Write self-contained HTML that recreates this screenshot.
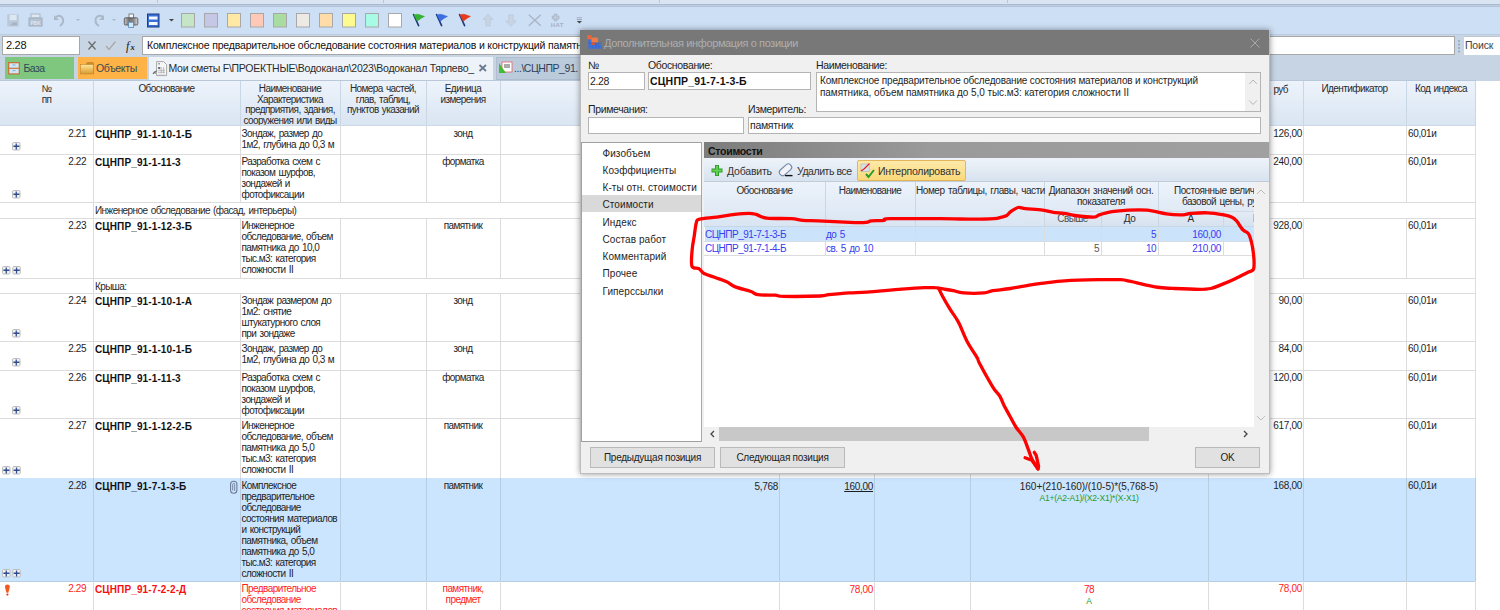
<!DOCTYPE html><html><head><meta charset="utf-8"><style>
html,body{margin:0;padding:0;}
body{width:1500px;height:610px;overflow:hidden;position:relative;background:#fff;font-family:"Liberation Sans",sans-serif;}
div{position:absolute;box-sizing:border-box;}
.g{white-space:pre;font-size:10px;line-height:11px;letter-spacing:-0.58px;word-spacing:1px;color:#1e1e1e;}
.n{white-space:pre;font-size:10px;line-height:11px;color:#1e1e1e;}
.b{white-space:pre;font-size:10px;line-height:11px;font-weight:bold;letter-spacing:0.12px;color:#111;}
.d{white-space:pre;font-size:10px;line-height:12px;color:#1e1e1e;}
svg{position:absolute;overflow:visible;}
</style></head><body><div style="left:0px;top:0px;width:1500px;height:4px;background:#d9e5f2"></div><div style="left:157px;top:0px;width:1px;height:3px;background:#b8c6d6"></div><div style="left:383px;top:0px;width:1px;height:3px;background:#b8c6d6"></div><div style="left:659px;top:0px;width:1px;height:3px;background:#b8c6d6"></div><div style="left:1007px;top:0px;width:1px;height:3px;background:#b8c6d6"></div><div style="left:0px;top:4px;width:1500px;height:1px;background:#a8b8cf"></div><div style="left:0px;top:5px;width:1500px;height:1px;background:#c3cfde"></div><div style="left:0px;top:6px;width:1500px;height:1px;background:#b0c2d9"></div><div style="left:0px;top:7px;width:1500px;height:27px;background:#cddff4"></div><div style="left:0px;top:34px;width:1500px;height:1px;background:#bccce0"></div><div style="left:0px;top:35px;width:1500px;height:21px;background:#c8d5e5"></div><div style="left:0px;top:56px;width:1500px;height:25px;background:#c6d4e4"></div><svg width="1500" height="40" style="left:0;top:0"><rect x="7.2" y="14.4" width="11.6" height="12" fill="#bcc9d8"/><rect x="9.6" y="15" width="7" height="5.2" fill="#dde7f3"/><path d="M10 25.5 l3 -3 h4 v3z" fill="#a4b3c5"/><rect x="31" y="14" width="9" height="4" fill="#dfe7f0" stroke="#aab8c8"/><rect x="29" y="18" width="13" height="8" fill="#b5c2d1" stroke="#9fb0c3"/><text x="30.5" y="24.5" font-size="5" fill="#eef" font-family="Liberation Sans">PBK</text><path d="M56 17 q5 -3 7 2 q1 4 -3 7" fill="none" stroke="#aab8c8" stroke-width="2"/><path d="M54 15 l0 5 l5 0z" fill="#aab8c8"/><path d="M76 19 l2 2 l2 -2z" fill="#aab8c8"/><path d="M99 26 q-5 -3 -3 -8 q3 -4 7 -1" fill="none" stroke="#aab8c8" stroke-width="2"/><path d="M104 15 l0 5 l-5 0z" fill="#aab8c8"/><path d="M112 19 l2 2 l2 -2z" fill="#aab8c8"/><defs><linearGradient id="pg" x1="0" y1="0" x2="1" y2="0"><stop offset="0" stop-color="#c8c8c8"/><stop offset="0.35" stop-color="#707070"/><stop offset="0.7" stop-color="#8a8a8a"/><stop offset="1" stop-color="#d8d8d8"/></linearGradient></defs><rect x="129" y="14" width="4.5" height="4.5" fill="#fafafa" stroke="#666" stroke-width="0.8"/><rect x="124.3" y="17.8" width="13.5" height="7.2" rx="1.2" fill="url(#pg)" stroke="#4a4a4a" stroke-width="0.8"/><rect x="128.6" y="22.2" width="5" height="5.3" fill="#cfe8fb" stroke="#5a88b8" stroke-width="0.8"/><rect x="147.5" y="14" width="11.5" height="13" fill="#3a6fd8" stroke="#1d3f7a"/><rect x="149" y="16.5" width="8.5" height="3" fill="#f4f8ff"/><rect x="149" y="22" width="8.5" height="3" fill="#f4f8ff"/><path d="M169 19 l2.5 2.5 l2.5 -2.5z" fill="#444"/><rect x="181.5" y="13.5" width="13" height="13.5" fill="#c6e5c6" stroke="#a8a8a8"/><rect x="204.5" y="13.5" width="13" height="13.5" fill="#c6c6e7" stroke="#a8a8a8"/><rect x="227.5" y="13.5" width="13" height="13.5" fill="#ffe9a4" stroke="#a8a8a8"/><rect x="250.5" y="13.5" width="13" height="13.5" fill="#ffc9b8" stroke="#a8a8a8"/><rect x="273.5" y="13.5" width="13" height="13.5" fill="#a8dca0" stroke="#a8a8a8"/><rect x="296.5" y="13.5" width="13" height="13.5" fill="#ede9e5" stroke="#a8a8a8"/><rect x="319.5" y="13.5" width="13" height="13.5" fill="#ffdca8" stroke="#a8a8a8"/><rect x="342.5" y="13.5" width="13" height="13.5" fill="#fdfa90" stroke="#a8a8a8"/><rect x="365.5" y="13.5" width="13" height="13.5" fill="#a8fce6" stroke="#a8a8a8"/><rect x="388.5" y="13.5" width="13" height="13.5" fill="#ffffff" stroke="#a8a8a8"/><path d="M413.6 14.6 L418.6 25.6" stroke="#1e3a7a" stroke-width="1.6" stroke-linecap="round"/><path d="M414 15 Q416.5 13.6 419.2 14.6 L424.5 16.4 Q421 17.8 417.3 21.3 Z" fill="#32b332" stroke="#32b332" stroke-width="0.5"/><path d="M436.6 14.6 L441.6 25.6" stroke="#1e3a7a" stroke-width="1.6" stroke-linecap="round"/><path d="M437 15 Q439.5 13.6 442.2 14.6 L447.5 16.4 Q444 17.8 440.3 21.3 Z" fill="#3c6fe0" stroke="#3c6fe0" stroke-width="0.5"/><path d="M459.6 14.6 L464.6 25.6" stroke="#1e3a7a" stroke-width="1.6" stroke-linecap="round"/><path d="M460 15 Q462.5 13.6 465.2 14.6 L470.5 16.4 Q467 17.8 463.3 21.3 Z" fill="#e83a1c" stroke="#e83a1c" stroke-width="0.5"/><path d="M488 14.3 l5.2 5.3 h-3 v6.2 h-4.4 v-6.2 h-3z" fill="#c8d4e2" stroke="#b5c3d3" stroke-width="0.6"/><path d="M511 26.3 l5.2 -5.3 h-3 v-6 h-4.4 v6 h-3z" fill="#c8d4e2" stroke="#b5c3d3" stroke-width="0.6"/><path d="M528.8 14.8 l12 11 M540.8 14.8 l-12 11" stroke="#aab6c6" stroke-width="1.5"/><path d="M554.3 14.2 h2.6 v2 h2 v2.6 h-2 v2 h-2.6 v-2 h-2 v-2.6 h2z" fill="#c0cad8" stroke="#a5b0bf" stroke-width="0.8"/><text x="550.8" y="26.6" font-size="6" font-weight="bold" fill="#a5b0bf" font-family="Liberation Sans" letter-spacing="0.3">НАТ</text><path d="M576.8 17.8 h5.2 M576.8 19.6 h5.2" stroke="#98a4b4" stroke-width="0.9"/><path d="M576.8 21 l2.6 2.6 l2.6 -2.6z" fill="#4a4a4a"/></svg><div style="left:2px;top:36px;width:78px;height:19px;background:#fff;border:1px solid #a7a7a7"></div><div class="n" style="left:6px;top:40px;font-size:11px;letter-spacing:-0.3px;color:#111">2.28</div><svg width="160" height="60" style="left:0;top:0"><path d="M88.5 41.5 l7 8 M95.5 41.5 l-7 8" stroke="#6d6d6d" stroke-width="1.3"/><path d="M106 46 l3 3.5 l6.5 -8" fill="none" stroke="#a9a9a9" stroke-width="1.3"/><text x="126" y="50" font-size="12" font-style="italic" font-family="Liberation Serif" fill="#222">f</text><text x="130.5" y="50" font-size="8.5" font-style="italic" font-weight="bold" font-family="Liberation Serif" fill="#222">x</text></svg><div style="left:142px;top:36px;width:1313px;height:19px;background:#fff;border:1px solid #a7a7a7"></div><div class="n" style="left:147px;top:40px;font-size:10.5px;letter-spacing:-0.17px;color:#111">Комплексное предварительное обследование состояния материалов и конструкций памятника</div><svg width="10" height="20" style="left:1456px;top:38px"><circle cx="3" cy="3" r="0.9" fill="#8aa0bb"/><circle cx="3" cy="6.5" r="0.9" fill="#8aa0bb"/><circle cx="3" cy="10" r="0.9" fill="#8aa0bb"/><circle cx="3" cy="13.5" r="0.9" fill="#8aa0bb"/></svg><div style="left:1464px;top:36px;width:40px;height:19px;background:#fff;border-top:1px solid #c0c8d2"></div><div class="n" style="left:1465px;top:40px;font-size:10.5px;letter-spacing:-0.2px;color:#444">Поиск</div><div style="left:5px;top:57px;width:69px;height:22px;background:#7fc77f"></div><div style="left:78px;top:57px;width:69px;height:22px;background:#ffb347"></div><div style="left:149px;top:57px;width:344px;height:24px;background:#eef3fa"></div><div style="left:496px;top:57px;width:90px;height:23px;background:#bccbdc;border:1px solid #aebdd0"></div><svg width="600" height="82" style="left:0;top:0"><rect x="8" y="62" width="12" height="12.5" fill="#c8743a"/><rect x="9.3" y="63.3" width="9.4" height="4.4" fill="#cfe6fb"/><rect x="9.3" y="68.9" width="9.4" height="4.4" fill="#cfe6fb"/><path d="M12.5 65 h3 M12.5 70.6 h3" stroke="#7a98b8" stroke-width="0.8"/><defs><linearGradient id="fg" x1="0" y1="0" x2="0" y2="1"><stop offset="0" stop-color="#fde79a"/><stop offset="1" stop-color="#d99a2e"/></linearGradient></defs><path d="M86 64 q0 -2 2 -2 h4 q2 0 2 2 v10 h-8z" fill="#c98a2a"/><rect x="80.5" y="64.5" width="13" height="9.5" fill="url(#fg)" stroke="#b97d22" stroke-width="0.5"/><path d="M156.6 61.6 h7 l3 3 v11 h-10z" fill="#f6f6f6" stroke="#a0a0a0" stroke-width="0.9"/><rect x="158.2" y="63.2" width="1.8" height="1.2" fill="#888"/><rect x="158.2" y="67" width="2" height="2" fill="#5a6a80"/><path d="M158 70.3 h7 M158 72.3 h7 M161.2 67 v6 M163.6 67 v6" stroke="#a8a8a8" stroke-width="0.7"/><path d="M158 74.3 h7" stroke="#d0d0d0" stroke-width="0.8"/><path d="M152.8 73.8 l4 -3.2 M154 71.6 l1.6 1.8" stroke="#6a6a6a" stroke-width="1.1"/><path d="M479.5 65 l6.5 6 M486 65 l-6.5 6" stroke="#6a7a90" stroke-width="1.8"/><rect x="502" y="62" width="10" height="10" fill="#fff" stroke="#e06060" stroke-width="0.8"/><rect x="504" y="64" width="6" height="4" fill="#aaa"/><path d="M499 63 v10 h7z" fill="#44bb33"/></svg><div class="n" style="left:23.5px;top:63px;font-size:10.5px;letter-spacing:-0.6px;color:#2c4a58">База</div><div class="n" style="left:96px;top:63px;font-size:10.5px;letter-spacing:-0.35px;color:#3a4a50">Объекты</div><div class="n" style="left:168.5px;top:63px;font-size:10.5px;letter-spacing:-0.25px;color:#2b2b2b">Мои сметы F\ПРОЕКТНЫЕ\Водоканал\2023\Водоканал Тярлево_</div><div class="n" style="left:514px;top:63px;font-size:10.5px;letter-spacing:-0.45px;color:#2e3e58">...\СЦНПР_91.</div><div style="left:0;top:80px;width:1476px;height:1px;background:#b8c8da"></div><div style="left:0px;top:81px;width:1476px;height:45px;background:linear-gradient(#edf3fb,#d9e5f2)"></div><div style="left:93px;top:81px;width:1px;height:45px;background:#c9d6e3"></div><div style="left:240px;top:81px;width:1px;height:45px;background:#c9d6e3"></div><div style="left:340px;top:81px;width:1px;height:45px;background:#c9d6e3"></div><div style="left:426px;top:81px;width:1px;height:45px;background:#c9d6e3"></div><div style="left:500px;top:81px;width:1px;height:45px;background:#c9d6e3"></div><div style="left:779px;top:81px;width:1px;height:45px;background:#c9d6e3"></div><div style="left:874px;top:81px;width:1px;height:45px;background:#c9d6e3"></div><div style="left:970px;top:81px;width:1px;height:45px;background:#c9d6e3"></div><div style="left:1208px;top:81px;width:1px;height:45px;background:#c9d6e3"></div><div style="left:1303px;top:81px;width:1px;height:45px;background:#c9d6e3"></div><div style="left:1406px;top:81px;width:1px;height:45px;background:#c9d6e3"></div><div style="left:1475px;top:81px;width:1px;height:45px;background:#c9d6e3"></div><div style="left:0px;top:125px;width:1476px;height:1px;background:#cdd9e6"></div><div style="left:0;top:81px;width:1500px;height:44px;overflow:hidden"><div class="g" style="left:0px;top:3.3px;width:93px;text-align:center;color:#2a2a2a;line-height:10.6px">№
пп</div><div class="g" style="left:93px;top:3.3px;width:147px;text-align:center;color:#2a2a2a;line-height:10.6px">Обоснование</div><div class="g" style="left:240px;top:3.3px;width:100px;text-align:center;color:#2a2a2a;line-height:10.6px">Наименование
Характеристика
предприятия, здания,
сооружения или виды</div><div class="g" style="left:340px;top:3.3px;width:86px;text-align:center;color:#2a2a2a;line-height:10.6px">Номера частей,
глав, таблиц,
пунктов указаний</div><div class="g" style="left:426px;top:3.3px;width:74px;text-align:center;color:#2a2a2a;line-height:10.6px">Единица
измерения</div><div class="g" style="left:1303px;top:3.3px;width:103px;text-align:center;color:#2a2a2a;line-height:10.6px">Идентификатор</div><div class="g" style="left:1406px;top:3.3px;width:70px;text-align:center;color:#2a2a2a;line-height:10.6px">Код индекса</div><div class="g" style="right:212px;top:3.3px;text-align:right;color:#2a2a2a">Стоимость, руб</div></div><div style="left:0px;top:154px;width:1476px;height:1px;background:#dcdcdc"></div><div style="left:93px;top:126px;width:1px;height:28px;background:#dcdcdc"></div><div style="left:240px;top:126px;width:1px;height:28px;background:#dcdcdc"></div><div style="left:340px;top:126px;width:1px;height:28px;background:#dcdcdc"></div><div style="left:426px;top:126px;width:1px;height:28px;background:#dcdcdc"></div><div style="left:500px;top:126px;width:1px;height:28px;background:#dcdcdc"></div><div style="left:779px;top:126px;width:1px;height:28px;background:#dcdcdc"></div><div style="left:874px;top:126px;width:1px;height:28px;background:#dcdcdc"></div><div style="left:970px;top:126px;width:1px;height:28px;background:#dcdcdc"></div><div style="left:1208px;top:126px;width:1px;height:28px;background:#dcdcdc"></div><div style="left:1303px;top:126px;width:1px;height:28px;background:#dcdcdc"></div><div style="left:1406px;top:126px;width:1px;height:28px;background:#dcdcdc"></div><div style="left:1475px;top:126px;width:1px;height:28px;background:#dcdcdc"></div><div class="g" style="right:1414px;top:128px;text-align:right;color:#1e1e1e;letter-spacing:-0.45px">2.21</div><div class="b" style="left:95px;top:129px;color:#111">СЦНПР_91-1-10-1-Б</div><div class="g" style="left:241.5px;top:128px;color:#1e1e1e">Зондаж, размер до
1м2, глубина до 0,3 м</div><div class="g" style="left:426px;top:128px;width:74px;text-align:center;color:#1e1e1e">зонд</div><div class="g" style="right:198px;top:128px;text-align:right;color:#1e1e1e;letter-spacing:-0.3px">126,00</div><div class="g" style="left:1408px;top:128px;color:#1e1e1e;letter-spacing:-0.35px">60,01и</div><div style="left:0px;top:202px;width:1476px;height:1px;background:#dcdcdc"></div><div style="left:93px;top:154px;width:1px;height:48px;background:#dcdcdc"></div><div style="left:240px;top:154px;width:1px;height:48px;background:#dcdcdc"></div><div style="left:340px;top:154px;width:1px;height:48px;background:#dcdcdc"></div><div style="left:426px;top:154px;width:1px;height:48px;background:#dcdcdc"></div><div style="left:500px;top:154px;width:1px;height:48px;background:#dcdcdc"></div><div style="left:779px;top:154px;width:1px;height:48px;background:#dcdcdc"></div><div style="left:874px;top:154px;width:1px;height:48px;background:#dcdcdc"></div><div style="left:970px;top:154px;width:1px;height:48px;background:#dcdcdc"></div><div style="left:1208px;top:154px;width:1px;height:48px;background:#dcdcdc"></div><div style="left:1303px;top:154px;width:1px;height:48px;background:#dcdcdc"></div><div style="left:1406px;top:154px;width:1px;height:48px;background:#dcdcdc"></div><div style="left:1475px;top:154px;width:1px;height:48px;background:#dcdcdc"></div><div class="g" style="right:1414px;top:156px;text-align:right;color:#1e1e1e;letter-spacing:-0.45px">2.22</div><div class="b" style="left:95px;top:157px;color:#111">СЦНПР_91-1-11-3</div><div class="g" style="left:241.5px;top:156px;color:#1e1e1e">Разработка схем с
показом шурфов,
зондажей и
фотофиксации</div><div class="g" style="left:426px;top:156px;width:74px;text-align:center;color:#1e1e1e">форматка</div><div class="g" style="right:198px;top:156px;text-align:right;color:#1e1e1e;letter-spacing:-0.3px">240,00</div><div class="g" style="left:1408px;top:156px;color:#1e1e1e;letter-spacing:-0.35px">60,01и</div><div style="left:0px;top:218px;width:1476px;height:1px;background:#dcdcdc"></div><div style="left:93px;top:202px;width:1px;height:16px;background:#dcdcdc"></div><div style="left:1475px;top:202px;width:1px;height:16px;background:#dcdcdc"></div><div class="g" style="left:95px;top:205px;color:#2a2a2a">Инженерное обследование (фасад, интерьеры)</div><div style="left:0px;top:278px;width:1476px;height:1px;background:#dcdcdc"></div><div style="left:93px;top:218px;width:1px;height:60px;background:#dcdcdc"></div><div style="left:240px;top:218px;width:1px;height:60px;background:#dcdcdc"></div><div style="left:340px;top:218px;width:1px;height:60px;background:#dcdcdc"></div><div style="left:426px;top:218px;width:1px;height:60px;background:#dcdcdc"></div><div style="left:500px;top:218px;width:1px;height:60px;background:#dcdcdc"></div><div style="left:779px;top:218px;width:1px;height:60px;background:#dcdcdc"></div><div style="left:874px;top:218px;width:1px;height:60px;background:#dcdcdc"></div><div style="left:970px;top:218px;width:1px;height:60px;background:#dcdcdc"></div><div style="left:1208px;top:218px;width:1px;height:60px;background:#dcdcdc"></div><div style="left:1303px;top:218px;width:1px;height:60px;background:#dcdcdc"></div><div style="left:1406px;top:218px;width:1px;height:60px;background:#dcdcdc"></div><div style="left:1475px;top:218px;width:1px;height:60px;background:#dcdcdc"></div><div class="g" style="right:1414px;top:220px;text-align:right;color:#1e1e1e;letter-spacing:-0.45px">2.23</div><div class="b" style="left:95px;top:221px;color:#111">СЦНПР_91-1-12-3-Б</div><div class="g" style="left:241.5px;top:220px;color:#1e1e1e">Инженерное
обследование, объем
памятника до 10,0
тыс.м3: категория
сложности II</div><div class="g" style="left:426px;top:220px;width:74px;text-align:center;color:#1e1e1e">памятник</div><div class="g" style="right:198px;top:220px;text-align:right;color:#1e1e1e;letter-spacing:-0.3px">928,00</div><div class="g" style="left:1408px;top:220px;color:#1e1e1e;letter-spacing:-0.35px">60,01и</div><div style="left:0px;top:293px;width:1476px;height:1px;background:#dcdcdc"></div><div style="left:93px;top:278px;width:1px;height:15px;background:#dcdcdc"></div><div style="left:1475px;top:278px;width:1px;height:15px;background:#dcdcdc"></div><div class="g" style="left:95px;top:281px;color:#2a2a2a">Крыша:</div><div style="left:0px;top:341px;width:1476px;height:1px;background:#dcdcdc"></div><div style="left:93px;top:293px;width:1px;height:48px;background:#dcdcdc"></div><div style="left:240px;top:293px;width:1px;height:48px;background:#dcdcdc"></div><div style="left:340px;top:293px;width:1px;height:48px;background:#dcdcdc"></div><div style="left:426px;top:293px;width:1px;height:48px;background:#dcdcdc"></div><div style="left:500px;top:293px;width:1px;height:48px;background:#dcdcdc"></div><div style="left:779px;top:293px;width:1px;height:48px;background:#dcdcdc"></div><div style="left:874px;top:293px;width:1px;height:48px;background:#dcdcdc"></div><div style="left:970px;top:293px;width:1px;height:48px;background:#dcdcdc"></div><div style="left:1208px;top:293px;width:1px;height:48px;background:#dcdcdc"></div><div style="left:1303px;top:293px;width:1px;height:48px;background:#dcdcdc"></div><div style="left:1406px;top:293px;width:1px;height:48px;background:#dcdcdc"></div><div style="left:1475px;top:293px;width:1px;height:48px;background:#dcdcdc"></div><div class="g" style="right:1414px;top:295px;text-align:right;color:#1e1e1e;letter-spacing:-0.45px">2.24</div><div class="b" style="left:95px;top:296px;color:#111">СЦНПР_91-1-10-1-А</div><div class="g" style="left:241.5px;top:295px;color:#1e1e1e">Зондаж размером до
1м2: снятие
штукатурного слоя
при зондаже</div><div class="g" style="left:426px;top:295px;width:74px;text-align:center;color:#1e1e1e">зонд</div><div class="g" style="right:198px;top:295px;text-align:right;color:#1e1e1e;letter-spacing:-0.3px">90,00</div><div class="g" style="left:1408px;top:295px;color:#1e1e1e;letter-spacing:-0.35px">60,01и</div><div style="left:0px;top:370px;width:1476px;height:1px;background:#dcdcdc"></div><div style="left:93px;top:341px;width:1px;height:29px;background:#dcdcdc"></div><div style="left:240px;top:341px;width:1px;height:29px;background:#dcdcdc"></div><div style="left:340px;top:341px;width:1px;height:29px;background:#dcdcdc"></div><div style="left:426px;top:341px;width:1px;height:29px;background:#dcdcdc"></div><div style="left:500px;top:341px;width:1px;height:29px;background:#dcdcdc"></div><div style="left:779px;top:341px;width:1px;height:29px;background:#dcdcdc"></div><div style="left:874px;top:341px;width:1px;height:29px;background:#dcdcdc"></div><div style="left:970px;top:341px;width:1px;height:29px;background:#dcdcdc"></div><div style="left:1208px;top:341px;width:1px;height:29px;background:#dcdcdc"></div><div style="left:1303px;top:341px;width:1px;height:29px;background:#dcdcdc"></div><div style="left:1406px;top:341px;width:1px;height:29px;background:#dcdcdc"></div><div style="left:1475px;top:341px;width:1px;height:29px;background:#dcdcdc"></div><div class="g" style="right:1414px;top:343px;text-align:right;color:#1e1e1e;letter-spacing:-0.45px">2.25</div><div class="b" style="left:95px;top:344px;color:#111">СЦНПР_91-1-10-1-Б</div><div class="g" style="left:241.5px;top:343px;color:#1e1e1e">Зондаж, размер до
1м2, глубина до 0,3 м</div><div class="g" style="left:426px;top:343px;width:74px;text-align:center;color:#1e1e1e">зонд</div><div class="g" style="right:198px;top:343px;text-align:right;color:#1e1e1e;letter-spacing:-0.3px">84,00</div><div class="g" style="left:1408px;top:343px;color:#1e1e1e;letter-spacing:-0.35px">60,01и</div><div style="left:0px;top:418px;width:1476px;height:1px;background:#dcdcdc"></div><div style="left:93px;top:370px;width:1px;height:48px;background:#dcdcdc"></div><div style="left:240px;top:370px;width:1px;height:48px;background:#dcdcdc"></div><div style="left:340px;top:370px;width:1px;height:48px;background:#dcdcdc"></div><div style="left:426px;top:370px;width:1px;height:48px;background:#dcdcdc"></div><div style="left:500px;top:370px;width:1px;height:48px;background:#dcdcdc"></div><div style="left:779px;top:370px;width:1px;height:48px;background:#dcdcdc"></div><div style="left:874px;top:370px;width:1px;height:48px;background:#dcdcdc"></div><div style="left:970px;top:370px;width:1px;height:48px;background:#dcdcdc"></div><div style="left:1208px;top:370px;width:1px;height:48px;background:#dcdcdc"></div><div style="left:1303px;top:370px;width:1px;height:48px;background:#dcdcdc"></div><div style="left:1406px;top:370px;width:1px;height:48px;background:#dcdcdc"></div><div style="left:1475px;top:370px;width:1px;height:48px;background:#dcdcdc"></div><div class="g" style="right:1414px;top:372px;text-align:right;color:#1e1e1e;letter-spacing:-0.45px">2.26</div><div class="b" style="left:95px;top:373px;color:#111">СЦНПР_91-1-11-3</div><div class="g" style="left:241.5px;top:372px;color:#1e1e1e">Разработка схем с
показом шурфов,
зондажей и
фотофиксации</div><div class="g" style="left:426px;top:372px;width:74px;text-align:center;color:#1e1e1e">форматка</div><div class="g" style="right:198px;top:372px;text-align:right;color:#1e1e1e;letter-spacing:-0.3px">120,00</div><div class="g" style="left:1408px;top:372px;color:#1e1e1e;letter-spacing:-0.35px">60,01и</div><div style="left:0px;top:478px;width:1476px;height:1px;background:#dcdcdc"></div><div style="left:93px;top:418px;width:1px;height:60px;background:#dcdcdc"></div><div style="left:240px;top:418px;width:1px;height:60px;background:#dcdcdc"></div><div style="left:340px;top:418px;width:1px;height:60px;background:#dcdcdc"></div><div style="left:426px;top:418px;width:1px;height:60px;background:#dcdcdc"></div><div style="left:500px;top:418px;width:1px;height:60px;background:#dcdcdc"></div><div style="left:779px;top:418px;width:1px;height:60px;background:#dcdcdc"></div><div style="left:874px;top:418px;width:1px;height:60px;background:#dcdcdc"></div><div style="left:970px;top:418px;width:1px;height:60px;background:#dcdcdc"></div><div style="left:1208px;top:418px;width:1px;height:60px;background:#dcdcdc"></div><div style="left:1303px;top:418px;width:1px;height:60px;background:#dcdcdc"></div><div style="left:1406px;top:418px;width:1px;height:60px;background:#dcdcdc"></div><div style="left:1475px;top:418px;width:1px;height:60px;background:#dcdcdc"></div><div class="g" style="right:1414px;top:420px;text-align:right;color:#1e1e1e;letter-spacing:-0.45px">2.27</div><div class="b" style="left:95px;top:421px;color:#111">СЦНПР_91-1-12-2-Б</div><div class="g" style="left:241.5px;top:420px;color:#1e1e1e">Инженерное
обследование, объем
памятника до 5,0
тыс.м3: категория
сложности II</div><div class="g" style="left:426px;top:420px;width:74px;text-align:center;color:#1e1e1e">памятник</div><div class="g" style="right:198px;top:420px;text-align:right;color:#1e1e1e;letter-spacing:-0.3px">617,00</div><div class="g" style="left:1408px;top:420px;color:#1e1e1e;letter-spacing:-0.35px">60,01и</div><div style="left:0px;top:478px;width:1476px;height:103px;background:#cce5fe"></div><div style="left:0px;top:581px;width:1476px;height:1px;background:#b7cde2"></div><div style="left:93px;top:478px;width:1px;height:103px;background:#b7cde2"></div><div style="left:240px;top:478px;width:1px;height:103px;background:#b7cde2"></div><div style="left:340px;top:478px;width:1px;height:103px;background:#b7cde2"></div><div style="left:426px;top:478px;width:1px;height:103px;background:#b7cde2"></div><div style="left:500px;top:478px;width:1px;height:103px;background:#b7cde2"></div><div style="left:779px;top:478px;width:1px;height:103px;background:#b7cde2"></div><div style="left:874px;top:478px;width:1px;height:103px;background:#b7cde2"></div><div style="left:970px;top:478px;width:1px;height:103px;background:#b7cde2"></div><div style="left:1208px;top:478px;width:1px;height:103px;background:#b7cde2"></div><div style="left:1303px;top:478px;width:1px;height:103px;background:#b7cde2"></div><div style="left:1406px;top:478px;width:1px;height:103px;background:#b7cde2"></div><div style="left:1475px;top:478px;width:1px;height:103px;background:#b7cde2"></div><div class="g" style="right:1414px;top:480px;text-align:right;color:#1e1e1e;letter-spacing:-0.45px">2.28</div><div class="b" style="left:95px;top:481px;color:#111">СЦНПР_91-7-1-3-Б</div><div class="g" style="left:241.5px;top:480px;color:#1e1e1e">Комплексное
предварительное
обследование
состояния материалов
и конструкций
памятника, объем
памятника до 5,0
тыс.м3: категория
сложности II</div><div class="g" style="left:426px;top:480px;width:74px;text-align:center;color:#1e1e1e">памятник</div><div class="g" style="right:198px;top:480px;text-align:right;color:#1e1e1e;letter-spacing:-0.3px">168,00</div><div class="g" style="left:1408px;top:480px;color:#1e1e1e;letter-spacing:-0.35px">60,01и</div><div style="left:93px;top:581px;width:1px;height:59px;background:#dcdcdc"></div><div style="left:240px;top:581px;width:1px;height:59px;background:#dcdcdc"></div><div style="left:340px;top:581px;width:1px;height:59px;background:#dcdcdc"></div><div style="left:426px;top:581px;width:1px;height:59px;background:#dcdcdc"></div><div style="left:500px;top:581px;width:1px;height:59px;background:#dcdcdc"></div><div style="left:779px;top:581px;width:1px;height:59px;background:#dcdcdc"></div><div style="left:874px;top:581px;width:1px;height:59px;background:#dcdcdc"></div><div style="left:970px;top:581px;width:1px;height:59px;background:#dcdcdc"></div><div style="left:1208px;top:581px;width:1px;height:59px;background:#dcdcdc"></div><div style="left:1303px;top:581px;width:1px;height:59px;background:#dcdcdc"></div><div style="left:1406px;top:581px;width:1px;height:59px;background:#dcdcdc"></div><div style="left:1475px;top:581px;width:1px;height:59px;background:#dcdcdc"></div><div class="g" style="right:1414px;top:583px;text-align:right;color:#ff1c1c;letter-spacing:-0.45px">2.29</div><div class="b" style="left:95px;top:584px;color:#f51010">СЦНПР_91-7-2-2-Д</div><div class="g" style="left:241.5px;top:583px;color:#ff1c1c">Предварительное
обследование
состояния материалов</div><div class="g" style="left:426px;top:583px;width:74px;text-align:center;color:#ff1c1c">памятник,
предмет</div><div class="g" style="right:198px;top:583px;text-align:right;color:#ff1c1c;letter-spacing:-0.3px">78,00</div><div class="g" style="left:1408px;top:583px;color:#ff1c1c;letter-spacing:-0.35px"></div><svg width="30" height="610" style="left:0;top:0"><rect x="12.5" y="142.5" width="7.5" height="7.5" rx="1.2" fill="#f2f2f2" stroke="#bdbdbd"/><path d="M16.25 143.6 v6 M13.4 146.25 h6" stroke="#2e4b8e" stroke-width="1.3"/><rect x="12.5" y="190.5" width="7.5" height="7.5" rx="1.2" fill="#f2f2f2" stroke="#bdbdbd"/><path d="M16.25 191.6 v6 M13.4 194.25 h6" stroke="#2e4b8e" stroke-width="1.3"/><rect x="2.5" y="266.5" width="7.5" height="7.5" rx="1.2" fill="#f2f2f2" stroke="#bdbdbd"/><path d="M6.25 267.6 v6 M3.4 270.25 h6" stroke="#2e4b8e" stroke-width="1.3"/><rect x="12.8" y="266.5" width="7.5" height="7.5" rx="1.2" fill="#f2f2f2" stroke="#bdbdbd"/><path d="M16.55 267.6 v6 M13.700000000000001 270.25 h6" stroke="#2e4b8e" stroke-width="1.3"/><rect x="12.5" y="329.5" width="7.5" height="7.5" rx="1.2" fill="#f2f2f2" stroke="#bdbdbd"/><path d="M16.25 330.6 v6 M13.4 333.25 h6" stroke="#2e4b8e" stroke-width="1.3"/><rect x="12.5" y="358.5" width="7.5" height="7.5" rx="1.2" fill="#f2f2f2" stroke="#bdbdbd"/><path d="M16.25 359.6 v6 M13.4 362.25 h6" stroke="#2e4b8e" stroke-width="1.3"/><rect x="12.5" y="406.5" width="7.5" height="7.5" rx="1.2" fill="#f2f2f2" stroke="#bdbdbd"/><path d="M16.25 407.6 v6 M13.4 410.25 h6" stroke="#2e4b8e" stroke-width="1.3"/><rect x="2.5" y="466.5" width="7.5" height="7.5" rx="1.2" fill="#f2f2f2" stroke="#bdbdbd"/><path d="M6.25 467.6 v6 M3.4 470.25 h6" stroke="#2e4b8e" stroke-width="1.3"/><rect x="12.8" y="466.5" width="7.5" height="7.5" rx="1.2" fill="#f2f2f2" stroke="#bdbdbd"/><path d="M16.55 467.6 v6 M13.700000000000001 470.25 h6" stroke="#2e4b8e" stroke-width="1.3"/><rect x="2.5" y="569.5" width="7.5" height="7.5" rx="1.2" fill="#f2f2f2" stroke="#bdbdbd"/><path d="M6.25 570.6 v6 M3.4 573.25 h6" stroke="#2e4b8e" stroke-width="1.3"/><rect x="12.8" y="569.5" width="7.5" height="7.5" rx="1.2" fill="#f2f2f2" stroke="#bdbdbd"/><path d="M16.55 570.6 v6 M13.700000000000001 573.25 h6" stroke="#2e4b8e" stroke-width="1.3"/></svg><div class="g" style="right:722px;top:481px;text-align:right;letter-spacing:-0.3px">5,768</div><div class="g" style="right:627px;top:481px;text-align:right;text-decoration:underline;letter-spacing:-0.3px">160,00</div><div class="g" style="left:970px;top:481px;width:238px;text-align:center;letter-spacing:-0.05px">160+(210-160)/(10-5)*(5,768-5)</div><div class="g" style="left:970px;top:492.5px;width:238px;text-align:center;font-size:8.5px;line-height:10px;letter-spacing:-0.2px;word-spacing:0;color:#1f9a1f">A1+(A2-A1)/(X2-X1)*(X-X1)</div><svg width="10" height="14" style="left:229px;top:480px"><rect x="1.6" y="1.3" width="6.3" height="12" rx="3" fill="none" stroke="#6c7c96" stroke-width="1.1"/><path d="M3.7 10.5 v-6 q0 -1.2 1 -1.2 q1 0 1 1.2 v6.5" fill="none" stroke="#6c7c96" stroke-width="0.9"/></svg><div class="g" style="right:627px;top:584px;text-align:right;color:#ff1c1c;letter-spacing:-0.3px">78,00</div><div class="g" style="left:970px;top:584px;width:238px;text-align:center;color:#ff1c1c">78</div><div class="g" style="left:970px;top:596px;width:238px;text-align:center;font-size:8.5px;line-height:10px;letter-spacing:0;color:#1f9a1f">A</div><svg width="12" height="16" style="left:3px;top:584px"><path d="M2 2.4 q0 -2 2.4 -2 q2.4 0 2.4 2 q0 1.4 -1.5 6.3 h-1.8 q-1.5 -4.9 -1.5 -6.3z" fill="#f05a22"/><circle cx="4.4" cy="10.6" r="1.1" fill="#d8401a"/></svg><div style="left:580px;top:30px;width:690px;height:444px;background:#f0f0f0;border:1px solid #bdbdbd;box-shadow:0 0 6px rgba(0,0,0,0.42)"></div><div style="left:580px;top:30px;width:689px;height:25px;background:#787878"></div><svg width="20" height="20" style="left:586px;top:34px"><path d="M2.3 5.6 h4 v2.4 h3.5 v1 h3 v1.4 h3 v4.3 h-13.5z" fill="#3f72d8"/><path d="M2.5 9 h13 M6.3 8 v6.5 M9.8 9 v5.5 M12.8 10.4 v4" stroke="#2c56b0" stroke-width="0.5"/><rect x="1.2" y="1.2" width="4.2" height="4" fill="#f0643a"/><rect x="5.4" y="3.6" width="6.5" height="4.8" fill="#f07a48"/><rect x="5.4" y="8.4" width="3.3" height="2.6" fill="#e8502a"/></svg><div class="d" style="left:604px;top:36.7px;font-size:11px;line-height:13px;letter-spacing:-0.39px;color:#aeaeae">Дополнительная информация о позиции</div><svg width="12" height="12" style="left:1250px;top:38px"><path d="M0.5 0.5 l9 9 M9.5 0.5 l-9 9" stroke="#a8a8a8" stroke-width="1"/></svg><div class="d" style="left:588px;top:59px;font-size:10.5px">№</div><div class="d" style="left:648px;top:59px;font-size:10.5px;letter-spacing:-0.35px">Обоснование:</div><div class="d" style="left:816px;top:59px;font-size:10.5px;letter-spacing:-0.35px">Наименование:</div><div style="left:588px;top:72px;width:57px;height:18px;background:#fff;border:1px solid #b4b4b4"></div><div style="left:648px;top:72px;width:163px;height:18px;background:#fff;border:1px solid #b4b4b4"></div><div style="left:816px;top:72px;width:445px;height:40px;background:#fff;border:1px solid #b4b4b4"></div><div class="d" style="left:590px;top:75px;font-size:10.5px;letter-spacing:-0.4px">2.28</div><div class="b" style="left:650px;top:75px;font-size:10.5px;line-height:12px;letter-spacing:0.18px">СЦНПР_91-7-1-3-Б</div><div class="d" style="left:820px;top:75px;font-size:10px;line-height:11.6px;letter-spacing:-0.18px">Комплексное предварительное обследование состояния материалов и конструкций</div><div class="d" style="left:820px;top:86.6px;font-size:10px;line-height:11.6px;letter-spacing:-0.07px">памятника, объем памятника до 5,0 тыс.м3: категория сложности II</div><div style="left:1245px;top:73px;width:15px;height:38px;background:#f0f0f0"></div><svg width="12" height="40" style="left:1247px;top:73px"><path d="M2.3 11 l3.8 -4 l3.8 4" fill="none" stroke="#b4b4b4" stroke-width="1"/><path d="M2.3 27.5 l3.8 4 l3.8 -4" fill="none" stroke="#b4b4b4" stroke-width="1"/></svg><div class="d" style="left:588px;top:103px;font-size:10.5px;letter-spacing:-0.35px">Примечания:</div><div class="d" style="left:748px;top:103px;font-size:10.5px;letter-spacing:-0.35px">Измеритель:</div><div style="left:588px;top:117px;width:156px;height:17px;background:#fff;border:1px solid #b4b4b4"></div><div style="left:748px;top:117px;width:513px;height:17px;background:#fff;border:1px solid #b4b4b4"></div><div class="d" style="left:750px;top:119px;font-size:10.5px;letter-spacing:-0.3px">памятник</div><div style="left:581px;top:142px;width:121px;height:300px;background:#fff;border:1px solid #a0a0a0;border-right:1px solid #a8a8a8"></div><div style="left:582px;top:195px;width:119px;height:17px;background:#d9d9d9"></div><div class="d" style="left:602.5px;top:147.5px;font-size:10px;letter-spacing:0.08px">Физобъем</div><div class="d" style="left:602.5px;top:164.78px;font-size:10px;letter-spacing:0.08px">Коэффициенты</div><div class="d" style="left:602.5px;top:182.06px;font-size:10px;letter-spacing:0.08px">К-ты отн. стоимости</div><div class="d" style="left:602.5px;top:199.34px;font-size:10px;letter-spacing:0.08px">Стоимости</div><div class="d" style="left:602.5px;top:216.62px;font-size:10px;letter-spacing:0.08px">Индекс</div><div class="d" style="left:602.5px;top:233.9px;font-size:10px;letter-spacing:0.08px">Состав работ</div><div class="d" style="left:602.5px;top:251.18px;font-size:10px;letter-spacing:0.08px">Комментарий</div><div class="d" style="left:602.5px;top:268.46000000000004px;font-size:10px;letter-spacing:0.08px">Прочее</div><div class="d" style="left:602.5px;top:285.74px;font-size:10px;letter-spacing:0.08px">Гиперссылки</div><div style="left:704px;top:142px;width:565px;height:17px;background:linear-gradient(90deg,#7c7c7c,#9a9a9a 40%,#a0a0a0)"></div><div class="b" style="left:708px;top:145px;font-size:10.5px;line-height:12px;letter-spacing:-0.25px;color:#111">Стоимости</div><div style="left:704px;top:158px;width:565px;height:24px;background:linear-gradient(#eef3f9,#d8e3ef);border-bottom:1px solid #c0ccd8"></div><div style="left:857px;top:160px;width:109px;height:21px;background:linear-gradient(#fde9a8,#fbd97a);border:1px solid #e5b55c;border-radius:2px"></div><svg width="300" height="30" style="left:704px;top:158px"><path d="M13 7 v11 M7.5 12.5 h11" stroke="#2a9a2a" stroke-width="4"/><path d="M13 7.8 v9.4 M8.3 12.5 h9.4" stroke="#62d050" stroke-width="2.2"/><g transform="translate(81.5 11.8) rotate(-42)"><rect x="-7" y="-3.3" width="14" height="6.6" rx="3" fill="#f2f2f8" stroke="#7088aa" stroke-width="1.1"/></g><path d="M81 17.6 h7.5" stroke="#111" stroke-width="1.4"/><rect x="157" y="6" width="8.2" height="7.5" fill="#d8e0ea" stroke="#a8b4c4" stroke-width="0.6"/><path d="M157 13 l3 -2 l2 -2 l3.5 -3.5" stroke="#e02020" fill="none" stroke-width="1.1"/><path d="M162 16 l2.5 3 l5.5 -7" stroke="#2a9a2a" fill="none" stroke-width="2"/></svg><div class="d" style="left:727px;top:165px;font-size:10.5px;letter-spacing:-0.2px;color:#333">Добавить</div><div class="d" style="left:797px;top:165px;font-size:10.5px;letter-spacing:-0.45px;color:#333">Удалить все</div><div class="d" style="left:878px;top:165px;font-size:10.5px;letter-spacing:-0.25px;color:#333">Интерполировать</div><div style="left:704px;top:182px;width:550px;height:245px;background:#fff"></div><div style="left:704px;top:182px;width:550px;height:44px;background:linear-gradient(#edf3fb,#d9e5f2)"></div><div style="left:1044px;top:211px;width:210px;height:15px;background:linear-gradient(#e4ecf6,#d6e2ef)"></div><div style="left:1044px;top:211px;width:210px;height:1px;background:#d0dbe6"></div><div style="left:825px;top:182px;width:1px;height:73px;background:#c9d6e3"></div><div style="left:915px;top:182px;width:1px;height:73px;background:#c9d6e3"></div><div style="left:1044px;top:182px;width:1px;height:73px;background:#c9d6e3"></div><div style="left:1158px;top:182px;width:1px;height:73px;background:#c9d6e3"></div><div style="left:1101px;top:211px;width:1px;height:44px;background:#c9d6e3"></div><div style="left:1223px;top:211px;width:1px;height:44px;background:#c9d6e3"></div><div style="left:704px;top:226px;width:550px;height:1px;background:#c9d6e3"></div><div style="left:705px;top:227px;width:549px;height:15px;background:#cce4fb"></div><div style="left:704px;top:241px;width:550px;height:1px;background:#d6dde6"></div><div style="left:704px;top:255px;width:550px;height:1px;background:#dcdcdc"></div><div style="left:825px;top:227px;width:1px;height:28px;background:#dcdcdc"></div><div style="left:915px;top:227px;width:1px;height:28px;background:#dcdcdc"></div><div style="left:1044px;top:227px;width:1px;height:28px;background:#dcdcdc"></div><div style="left:1101px;top:227px;width:1px;height:28px;background:#dcdcdc"></div><div style="left:1158px;top:227px;width:1px;height:28px;background:#dcdcdc"></div><div style="left:1223px;top:227px;width:1px;height:28px;background:#dcdcdc"></div><div style="left:704px;top:182px;width:550px;height:73px;overflow:hidden"><div class="g" style="left:0px;top:3px;width:121px;text-align:center;color:#2a2a2a">Обоснование</div><div class="g" style="left:121px;top:3px;width:90px;text-align:center;color:#2a2a2a">Наименование</div><div class="g" style="left:212px;top:3px;color:#2a2a2a;letter-spacing:-0.43px">Номер таблицы, главы, части</div><div class="g" style="left:340px;top:3px;width:114px;text-align:center;color:#2a2a2a;letter-spacing:-0.41px">Диапазон значений осн.
показателя</div><div class="g" style="left:470px;top:3px;color:#2a2a2a;letter-spacing:-0.45px">Постоянные величины</div><div class="g" style="left:478px;top:14px;color:#2a2a2a;letter-spacing:-0.45px">базовой цены, руб</div><div class="g" style="left:340px;top:31px;width:57px;text-align:center;color:#505050">Свыше</div><div class="g" style="left:397px;top:31px;width:57px;text-align:center;color:#2a2a2a">До</div><div class="g" style="left:454px;top:31px;width:65px;text-align:center;color:#2a2a2a">А</div><div class="g" style="left:549px;top:31px;color:#2a2a2a">В</div><div class="g" style="left:1px;top:47px;color:#3b3bf0;letter-spacing:-0.5px">СЦНПР_91-7-1-3-Б</div><div class="g" style="left:1px;top:61px;color:#3b3bf0;letter-spacing:-0.5px">СЦНПР_91-7-1-4-Б</div><div class="g" style="left:122px;top:47px;color:#3b3bf0;letter-spacing:-0.5px">до 5</div><div class="g" style="left:122px;top:61px;color:#3b3bf0;letter-spacing:-0.5px">св. 5 до 10</div></div><div class="g" style="right:344px;top:229px;text-align:right;color:#3b3bf0">5</div><div class="g" style="right:279px;top:229px;text-align:right;color:#3b3bf0;letter-spacing:-0.3px">160,00</div><div class="g" style="right:401px;top:243px;text-align:right;color:#555">5</div><div class="g" style="right:344px;top:243px;text-align:right;color:#3b3bf0">10</div><div class="g" style="right:279px;top:243px;text-align:right;color:#3b3bf0;letter-spacing:-0.3px">210,00</div><div style="left:1254px;top:182px;width:15px;height:245px;background:#f0f0f0"></div><svg width="14" height="250" style="left:1254px;top:182px"><path d="M3 12 l4 -4 l4 4" fill="none" stroke="#bdbdbd" stroke-width="1"/><path d="M3 234 l4 4 l4 -4" fill="none" stroke="#bdbdbd" stroke-width="1"/></svg><div style="left:704px;top:427px;width:565px;height:14px;background:#f0f0f0"></div><div style="left:719px;top:427px;width:430px;height:14px;background:#c8c8c8"></div><svg width="560" height="14" style="left:704px;top:427px"><path d="M10 4 l-3 3 l3 3" fill="none" stroke="#444" stroke-width="1.3"/><path d="M540 4 l3 3 l-3 3" fill="none" stroke="#444" stroke-width="1.3"/></svg><div style="left:590px;top:447px;width:125px;height:21px;background:#e1e1e1;border:1px solid #b9b9b9"></div><div class="d" style="left:590px;top:452px;width:125px;text-align:center;font-size:10px;letter-spacing:-0.25px;color:#222">Предыдущая позиция</div><div style="left:720px;top:447px;width:125px;height:21px;background:#e1e1e1;border:1px solid #b9b9b9"></div><div class="d" style="left:720px;top:452px;width:125px;text-align:center;font-size:10px;letter-spacing:-0.25px;color:#222">Следующая позиция</div><div style="left:1195px;top:447px;width:65px;height:21px;background:#e1e1e1;border:1px solid #b9b9b9"></div><div class="d" style="left:1195px;top:452px;width:65px;text-align:center;font-size:10px;letter-spacing:-0.25px;color:#222">OK</div><svg width="1500" height="610" style="left:0;top:0"><g fill="none" stroke="#ff0000" stroke-width="3.3" stroke-linejoin="round" stroke-linecap="round"><path d="M691.9,266.1 C690.8,262.9 691.8,254.3 692.2,249.3 C692.6,244.3 693.5,240.7 694.2,236.2 C694.9,231.7 695.5,225.2 696.4,222.4 C697.3,219.6 696.2,220.1 699.6,219.2 C703.0,218.3 710.8,217.9 716.7,217.1 C722.6,216.3 729.5,215.0 734.8,214.4 C740.1,213.8 745.2,213.3 748.7,213.3 C752.2,213.3 753.1,213.6 756.1,214.4 C759.1,215.2 760.9,217.4 766.8,218.1 C772.7,218.8 785.2,218.3 791.3,218.7 C797.3,219.1 798.6,220.0 803.1,220.3 C807.6,220.7 810.2,220.5 818.0,220.8 C825.8,221.2 842.0,222.1 850.0,222.4 C858.0,222.7 862.5,222.7 866.0,222.4 C869.5,222.1 868.3,221.2 871.3,220.8 C874.3,220.5 881.1,220.7 884.1,220.3 C887.1,220.0 880.1,219.0 889.5,218.7 C898.9,218.4 926.5,218.6 940.7,218.7 C954.9,218.8 965.9,219.2 974.8,219.2 C983.7,219.2 989.5,219.0 994.0,218.7 C998.5,218.3 999.4,217.6 1001.5,217.1 C1003.6,216.6 1005.3,216.4 1006.8,215.5 C1008.3,214.6 1008.8,213.0 1010.7,211.7 C1012.6,210.4 1015.6,208.0 1018.1,207.5 C1020.6,207.0 1021.5,208.3 1025.6,208.7 C1029.7,209.1 1038.1,209.5 1042.7,210.1 C1047.3,210.7 1049.8,211.8 1053.3,212.3 C1056.8,212.8 1060.4,212.8 1064.0,213.3 C1067.6,213.8 1069.7,214.9 1074.7,215.5 C1079.7,216.1 1089.8,217.2 1093.9,217.1 C1098.0,217.0 1096.2,215.8 1099.2,214.9 C1102.2,214.0 1107.2,212.5 1112.0,211.7 C1116.8,210.9 1122.1,210.4 1128.0,210.1 C1133.9,209.8 1140.8,209.5 1147.2,210.1 C1153.6,210.7 1160.5,213.1 1166.4,213.9 C1172.3,214.7 1178.7,214.9 1182.8,214.8 C1186.9,214.7 1186.9,213.7 1191.0,213.4 C1195.1,213.1 1201.9,212.6 1207.4,212.8 C1212.9,213.0 1219.7,214.1 1223.8,214.8 C1227.9,215.5 1229.8,216.1 1232.0,217.2 C1234.2,218.3 1235.5,219.8 1236.9,221.3 C1238.3,222.8 1239.1,224.7 1240.2,226.2 C1241.3,227.7 1242.0,229.1 1243.4,230.3 C1244.8,231.5 1247.0,231.6 1248.4,233.6 C1249.8,235.6 1250.8,239.4 1251.6,242.6 C1252.4,245.8 1252.9,249.2 1253.3,252.5 C1253.7,255.8 1254.1,259.4 1254.1,262.3 C1254.1,265.2 1254.2,268.1 1253.3,269.7 C1252.3,271.3 1251.4,270.6 1248.4,272.1 C1245.4,273.6 1239.6,276.6 1235.2,278.7 C1230.8,280.8 1226.2,282.8 1222.1,284.4 C1218.0,286.0 1214.5,287.7 1210.7,288.5 C1206.9,289.3 1205.2,289.3 1199.2,289.3 C1193.2,289.3 1181.1,288.8 1174.6,288.5 C1168.1,288.2 1164.9,288.1 1160.0,287.5 C1155.1,286.9 1150.2,285.8 1145.3,284.8 C1140.4,283.8 1134.8,282.2 1130.6,281.4 C1126.4,280.5 1125.8,280.0 1120.4,279.7 C1115.0,279.4 1107.7,279.5 1098.4,279.7 C1089.1,279.9 1073.4,280.3 1064.6,280.8 C1055.8,281.3 1051.2,282.2 1045.6,282.9 C1040.0,283.6 1036.8,283.9 1030.9,284.8 C1025.0,285.7 1016.8,287.5 1010.4,288.5 C1004.0,289.5 997.2,290.0 992.8,290.7 C988.4,291.4 988.9,292.5 984.0,292.9 C979.1,293.3 968.6,293.3 963.5,292.9 C958.4,292.5 956.4,291.3 953.2,290.7 C950.0,290.1 947.5,289.7 944.4,289.2 C941.3,288.7 938.0,287.9 934.6,287.7 C931.2,287.4 929.7,287.5 924.2,287.7 C918.7,287.9 911.1,288.4 901.6,289.1 C892.1,289.8 875.7,291.5 867.0,292.1 C858.3,292.7 856.0,292.5 849.6,292.9 C843.2,293.3 833.7,294.2 828.8,294.7 C823.9,295.2 827.7,295.7 820.2,296.0 C812.7,296.3 791.3,296.5 783.8,296.4 C776.3,296.3 779.4,295.5 775.1,295.2 C770.8,294.9 761.8,295.3 757.8,294.7 C753.8,294.1 754.6,292.8 750.9,291.5 C747.1,290.2 739.3,288.5 735.3,286.9 C731.2,285.3 730.1,283.3 726.6,281.7 C723.1,280.1 718.2,278.7 714.5,277.3 C710.8,275.9 706.7,274.9 704.1,273.5 C701.5,272.1 700.9,269.9 698.9,268.7 C696.9,267.5 693.0,269.3 691.9,266.1"/><path d="M938.9,288.9 C939.5,290.2 941.0,293.5 942.8,296.8 C944.6,300.1 947.6,305.2 949.7,308.6 C951.8,312.1 954.0,314.9 955.6,317.5 C957.2,320.1 957.5,320.2 959.5,324.3 C961.5,328.4 964.4,336.4 967.4,342.0 C970.4,347.6 975.2,354.4 977.2,357.8 C979.2,361.2 976.6,357.8 979.2,362.7 C981.8,367.6 989.6,381.7 993.0,387.3 C996.4,392.9 998.0,393.2 999.8,396.2 C1001.6,399.1 1002.1,401.7 1003.8,405.0 C1005.5,408.3 1007.8,412.3 1009.8,416.0 C1011.8,419.7 1013.6,423.5 1015.9,427.0 C1018.1,430.5 1021.2,433.2 1023.3,436.9 C1025.3,440.6 1026.8,445.5 1028.2,449.2 C1029.6,452.9 1030.3,455.7 1031.9,459.0 C1033.5,462.3 1037.0,467.2 1038.0,468.9"/><path d="M1025.1,457.8 L1031.9,460.2 L1038,468.9 M1034.3,452.3 L1036.2,455.3 L1038.6,466.4 L1038,468.9"/></g></svg></body></html>
